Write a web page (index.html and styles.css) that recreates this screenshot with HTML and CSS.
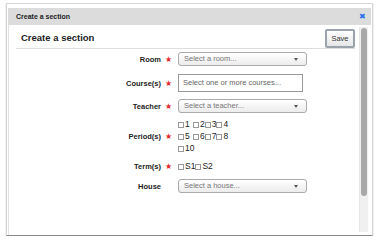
FILE: index.html
```html
<!DOCTYPE html>
<html lang="en">
<head>
  <meta charset="UTF-8" />
  <title>Create a section</title>
  <link rel="stylesheet" href="styles.css">
</head>
<body>
  <div class="dialog">
    <div class="titlebar">
      <span class="title">Create a section</span>
      <span class="close">&#x2716;</span>
    </div>
    <div class="body">
      <div class="content">
        <div class="header">
          <h1>Create a section</h1>
          <button class="save" type="button">Save</button>
        </div>

        <div class="row row-room">
          <label>Room</label><span class="star">&#9733;</span>
          <div class="select">Select a room...<span class="caret"></span></div>
        </div>

        <div class="row row-course">
          <label>Course(s)</label><span class="star">&#9733;</span>
          <div class="textbox">Select one or more courses...</div>
        </div>

        <div class="row row-teacher">
          <label>Teacher</label><span class="star">&#9733;</span>
          <div class="select">Select a teacher...<span class="caret"></span></div>
        </div>

        <div class="row row-period">
          <label>Period(s)</label><span class="star">&#9733;</span>
          <div class="checks">
            <div class="check-line">
              <span class="check wide"><i></i>1</span><span class="check"><i></i>2</span><span class="check"><i></i>3</span><span class="check"><i></i>4</span>
            </div>
            <div class="check-line">
              <span class="check wide"><i></i>5</span><span class="check"><i></i>6</span><span class="check"><i></i>7</span><span class="check"><i></i>8</span>
            </div>
            <div class="check-line">
              <span class="check"><i></i>10</span>
            </div>
          </div>
        </div>

        <div class="row row-term">
          <label>Term(s)</label><span class="star">&#9733;</span>
          <div class="check-line">
            <span class="check"><i></i>S1</span><span class="check"><i></i>S2</span>
          </div>
        </div>

        <div class="row row-house">
          <label>House</label><span class="star"></span>
          <div class="select">Select a house...<span class="caret"></span></div>
        </div>
      </div>
      <div class="scrollbar"><div class="thumb"></div></div>
    </div>
  </div>
</body>
</html>
```

FILE: styles.css
```css
/* Create a section dialog */
body {
  margin: 0;
  background: #fff;
  font-family: "Liberation Sans", Arial, sans-serif;
  color: #333;
}
.dialog {
  margin: 3px 0 0 6px;
  width: 367px;
  height: 233px;
  border: 1px solid #d6d6d6;
  border-bottom-color: #888;
  box-shadow: 0 1px 1px rgba(0, 0, 0, 0.35);
  padding: 4px 1px 0 1px;
  box-sizing: border-box;
  display: flex;
  flex-direction: column;
}
.titlebar {
  height: 17px;
  background: #dcdcdc;
  display: flex;
  align-items: center;
  justify-content: space-between;
  padding: 0 5px 0 8px;
}
.title { font-size: 7px; font-weight: bold; color: #222; }
.close { font-size: 8px; color: #2a6ff0; line-height: 1; }
.body {
  flex: 1;
  display: flex;
  border-left: 1px solid #e2e2e2;
}
.content { flex: 1; padding: 0 4px 0 7px; }
.header {
  display: flex;
  align-items: center;
  justify-content: space-between;
  height: 22px;
  border-bottom: 1px solid #ddd;
  margin-top: 1px;
  padding: 0 0 0 5px;
}
h1 { margin: 0; font-size: 9.5px; font-weight: bold; color: #222; }
.save {
  font-family: inherit;
  font-size: 7.5px;
  color: #333;
  width: 30px;
  height: 19px;
  padding: 0;
  border: 2px solid #9aa3ab;
  border-radius: 2px;
  background: linear-gradient(#fff, #e6e6e6);
  margin-top: 2px;
}
.row {
  display: flex;
  align-items: center;
}
.row label {
  width: 145px;
  text-align: right;
  font-size: 7.5px;
  font-weight: bold;
  color: #222;
}
.star {
  width: 15px;
  margin-right: 2px;
  text-align: center;
  color: #e52a2a;
  font-size: 8px;
}
.select, .textbox {
  position: relative;
  font-size: 7.5px;
  color: #777;
  box-sizing: border-box;
}
.select {
  width: 129px;
  height: 14px;
  line-height: 12px;
  padding-left: 5px;
  border: 1px solid #aaa;
  border-radius: 3px;
  background: linear-gradient(#fff, #ececec);
}
.caret {
  position: absolute;
  right: 8px;
  top: 5px;
  border-left: 2px solid transparent;
  border-right: 2px solid transparent;
  border-top: 3px solid #555;
}
.textbox {
  width: 125px;
  height: 18px;
  line-height: 16px;
  padding-left: 4px;
  border: 1px solid #999;
  background: #fff;
  color: #666;
}
.row-room { margin-top: 3px; }
.row-course { margin-top: 8px; }
.row-teacher { margin-top: 7px; }
.row-period { margin-top: 5px; }
.row-term { margin-top: 6px; }
.row-house { margin-top: 7px; }
.checks { display: flex; flex-direction: column; }
.check-line { display: flex; height: 12px; align-items: center; }
.check {
  display: inline-flex;
  align-items: center;
  font-size: 8.5px;
  color: #222;
}
.check.wide { width: 15px; }
.check i {
  display: inline-block;
  width: 4px;
  height: 4px;
  border: 1px solid #999;
  background: #fff;
  margin: 2px 1px 0 0;
}
.scrollbar {
  width: 8px;
  margin: 2px 3px 3px 0;
  background: #f0f0f0;
  border-left: 1px solid #e6e6e6;
}
.thumb {
  margin: 1px 1px 0 1px;
  height: 168px;
  border-radius: 3px;
  background: #a9a9a9;
}
```
